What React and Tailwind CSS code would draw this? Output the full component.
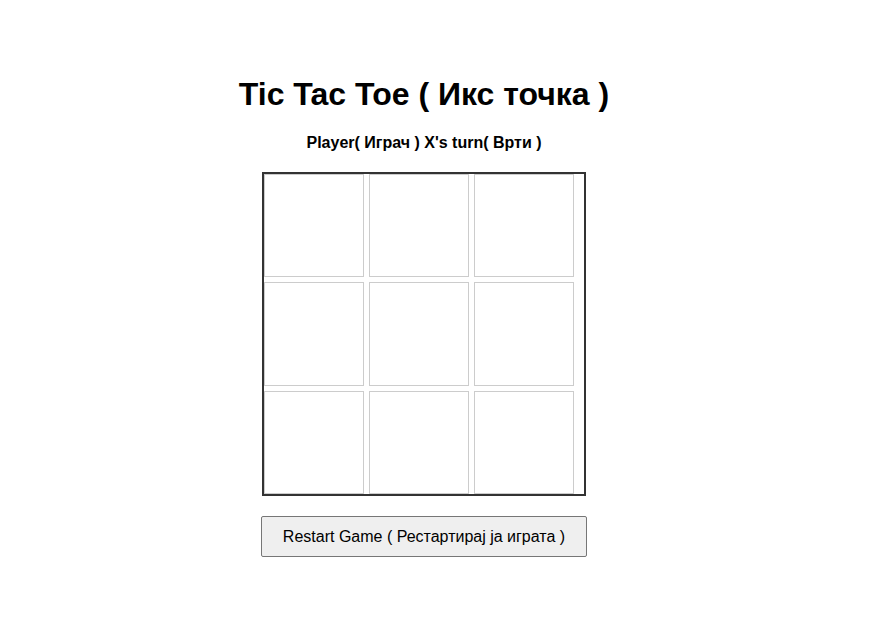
import React, { useState } from "react";

export default function App() {
  const [cells, setCells] = useState(Array(9).fill(null));
  const [xTurn, setXTurn] = useState(true);

  const click = (i) => {
    if (cells[i]) return;
    const next = cells.slice();
    next[i] = xTurn ? "X" : "O";
    setCells(next);
    setXTurn(!xTurn);
  };

  return (
    <div className="min-h-[623px] bg-white text-black" style={{ fontFamily: '"Liberation Sans", Arial, sans-serif' }}>
      <div className="w-[848px] flex flex-col items-center pt-[76px]">
        <h1 className="text-[32px] leading-[37px] font-bold">Tic Tac Toe ( Икс точка )</h1>
        <div className="mt-[21px] text-[16px] leading-[18px] font-bold">
          Player( Играч ) {xTurn ? "X" : "O"}'s turn( Врти )
        </div>
        <div className="mt-[20px] w-[324px] h-[324px] border-2 border-[#333] grid grid-cols-[repeat(3,100px)] grid-rows-3 gap-[5px]">
          {cells.map((c, i) => (
            <div
              key={i}
              onClick={() => click(i)}
              className="border border-[#ccc] flex items-center justify-center text-[40px] font-bold cursor-pointer"
            >
              {c}
            </div>
          ))}
        </div>
        <button
          onClick={() => {
            setCells(Array(9).fill(null));
            setXTurn(true);
          }}
          className="mt-[20px] h-[41px] px-[21px] bg-[#efefef] border border-[#767676] rounded-[2px] text-[16px] leading-[18px] text-black"
        >
          Restart Game ( Рестартирај ја играта )
        </button>
      </div>
    </div>
  );
}
